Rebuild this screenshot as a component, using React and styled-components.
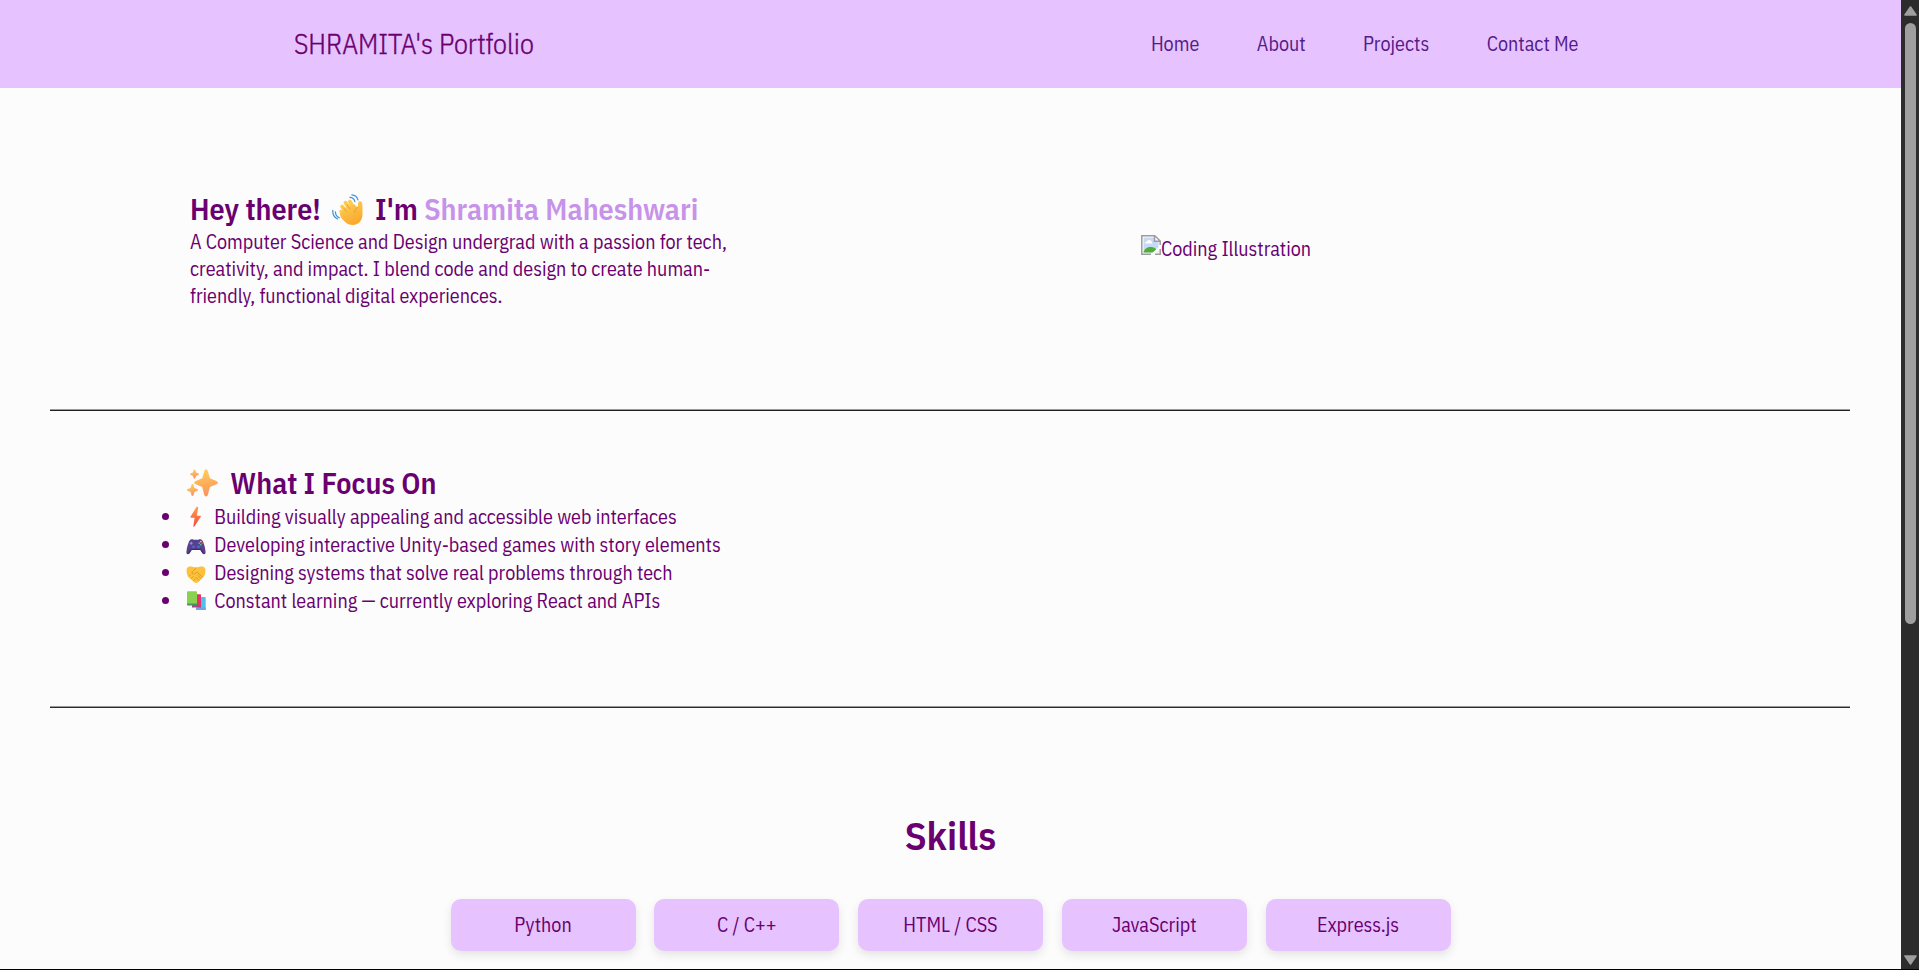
import React from 'react';
import styled, { createGlobalStyle } from 'styled-components';

const GlobalStyle = createGlobalStyle`
  * { margin: 0; padding: 0; box-sizing: border-box; }
  body {
    background: #fcfcfc;
    color: #6a0070;
    font-family: "IBM Plex Sans Condensed", "Open Sans", "Liberation Sans", sans-serif;
    font-size: 20px;
    overflow: hidden;
  }
`;

const Window = styled.div`
  display: flex;
  height: 970px;
  overflow: hidden;
  border-bottom: 1px solid #000;
`;

const Page = styled.div`
  flex: 1;
  min-width: 0;
  overflow: hidden;
`;

const Navbar = styled.header`
  display: flex;
  align-items: center;
  justify-content: space-between;
  height: 88px;
  padding: 0 322.5px 1px 294px;
  background: #e6c3ff;
`;

const Brand = styled.div`
  font-size: 28px;
  font-weight: 300;
  -webkit-text-stroke: 0.35px currentColor;
`;

const NavLinks = styled.nav`
  display: flex;
  gap: 57.5px;
`;

const NavLink = styled.a`
  color: #551a8b;
`;

const Hero = styled.section`
  display: flex;
  align-items: center;
  height: 321px;
  padding-left: 190px;
`;

const HeroText = styled.div`
  width: 951px;
`;

const Heading = styled.h2`
  height: 39px;
  font-size: 30px;
  font-weight: 600;
  line-height: 39px;
  white-space: nowrap;
`;

const Name = styled.span`
  color: #c792ea;
`;

const Intro = styled.p`
  max-width: 570px;
`;

const MissingImage = styled.div`
  display: flex;
  align-items: flex-start;
  svg { display: block; }
`;

const Divider = styled.hr`
  height: 2px;
  margin: 0 51px 0 50px;
  border: 0;
  border-top: 1px solid #9a9a9a;
  background: ${p => p.$color};
`;

const Focus = styled.section`
  height: 295px;
  padding: 52px 0 0 185px;
`;

const FocusList = styled.ul`
  margin-top: 1px;
  list-style: none;
`;

const FocusItem = styled.li`
  display: flex;
  align-items: center;
  height: 28px;
  line-height: 28px;
  white-space: nowrap;
  &::before {
    content: "";
    width: 7px;
    height: 7px;
    margin: 0 16px 1px -23px;
    border-radius: 50%;
    background: currentColor;
  }
`;

const Emoji = styled.svg`
  display: inline-block;
  overflow: visible;
  width: ${p => p.$size}px;
  height: ${p => p.$size}px;
  margin: 0 ${p => p.$after}px 0 ${p => p.$before || 0}px;
  vertical-align: ${p => p.$drop}px;
`;

const Skills = styled.section`
  display: flex;
  flex-direction: column;
  align-items: center;
  padding-top: 101px;
`;

const SkillsTitle = styled.h1`
  font-size: 40px;
  font-weight: 600;
  line-height: 52px;
`;

const SkillGrid = styled.div`
  display: flex;
  justify-content: space-between;
  width: 1000px;
  margin-top: 38px;
`;

const SkillCard = styled.div`
  width: 185px;
  padding: 12px 0 13px;
  border-radius: 10px;
  background: #e6c3ff;
  box-shadow: 0 4px 10px rgba(0, 0, 0, 0.1);
  text-align: center;
`;

const Scrollbar = styled.aside`
  display: flex;
  flex-direction: column;
  align-items: center;
  width: 18px;
  padding: 6px 0 4px;
  background: #2c2c2c;
`;

const Thumb = styled.div`
  width: 11px;
  height: 601px;
  margin: 7px 0 auto;
  border-radius: 6px;
  background: #9f9f9f;
`;

const Arrow = styled.svg`
  width: 13px;
  height: 10px;
  transform: ${p => (p.$down ? 'rotate(180deg)' : 'none')};
`;

const ScrollArrow = ({ down }) => (
  <Arrow $down={down} viewBox="0 0 13 10">
    <path d="M6.5 1 12 9H1Z" fill="#9f9f9f" stroke="#9f9f9f" strokeWidth="1.6" strokeLinejoin="round" />
  </Arrow>
);

const Wave = () => (
  <Emoji viewBox="0 0 32 32" $size={31} $before={5} $after={5.5} $drop={-5}>
    <defs>
      <linearGradient id="hand" x1="0" y1="0" x2="0.5" y2="1">
        <stop offset="0" stopColor="#ffd35a" />
        <stop offset="1" stopColor="#f9a92e" />
      </linearGradient>
    </defs>
    <g fill="none" stroke="#ffca4d" strokeWidth="4" strokeLinecap="round">
      <path d="M14 23 9.500 18" />
      <path d="m15 19-4.500-6" />
      <path d="M18.500 16 14 9" />
      <path d="m22.500 15-4-7" />
    </g>
    <path d="m8 20 7-7 8-2.500 3.500 3.500.4-4.500c.3-3 4.300-2.700 4.400.5l.2 10.500c0 6.500-3.500 11.500-10 11.500-5.500 0-9-3.500-12.500-8Z" fill="url(#hand)" />
    <path d="m12 14.500 3 3.800M15.500 11l3 4.500M26.500 14c-2 .8-3.200 2.500-3 5" fill="none" stroke="#e8952d" strokeWidth=".8" strokeLinecap="round" />
    <path d="M18.500 3.600q4 0 5.100 4.200M20.500.8q5 .4 6.300 5.200M3.500 18.500q.2 4.200 4 6M.8 16.800q-.5 6.500 5 9" fill="none" stroke="#4196d9" strokeWidth="1.300" strokeLinecap="round" />
  </Emoji>
);

const Sparkles = () => (
  <Emoji viewBox="0 0 32 32" $size={32} $before={1} $after={6} $drop={-5}>
    <defs>
      <linearGradient id="star" x1="0" y1="0" x2="0.2" y2="1">
        <stop offset="0" stopColor="#ffd35e" />
        <stop offset="1" stopColor="#fc9559" />
      </linearGradient>
    </defs>
    <g fill="url(#star)">
      <path d="M20 2.500c1 0 1.500.6 1.900 1.900l2 6.800 6.500 2.700c2 .8 2 2.600 0 3.400l-6.500 2.800-2 7.700c-.7 2.300-3 2.300-3.700 0l-2-7.700-6.400-2.800c-2-.8-2-2.600 0-3.400l6.400-2.700 2-6.800C18.500 3.100 19 2.500 20 2.500Z" />
      <path d="M8.500 2.500c.6 0 .8.400 1 1l.6 2 2 .8c1 .4 1 1.400 0 1.800l-2 .8-.7 2.100c-.3 1-1.500 1-1.800 0l-.7-2.100-2-.8c-1-.4-1-1.400 0-1.800l2-.8.6-2c.2-.6.500-1 1-1Z" />
      <path d="M6.500 17c.6 0 .9.500 1.100 1.200l.8 2.700 2.700 1.100c1.200.5 1.200 1.500 0 2l-2.700 1.100-.8 3c-.4 1.300-1.800 1.300-2.200 0l-.8-3L1.900 24c-1.200-.5-1.200-1.500 0-2l2.700-1.100.8-2.700c.2-.7.500-1.200 1.100-1.200Z" />
    </g>
  </Emoji>
);

const Bolt = () => (
  <Emoji viewBox="0 0 20 20" $size={20} $before={1} $after={4} $drop={-3}>
    <defs>
      <linearGradient id="bolt" x1="0" y1="0" x2="0" y2="1">
        <stop offset="0" stopColor="#ffa04b" />
        <stop offset="1" stopColor="#f4493e" />
      </linearGradient>
    </defs>
    <path d="M10.300.3 4.500 9.800c-.3.500-.1.900.5.900h3.600L7.400 19c-.1.900.5 1.100 1 .4l6.400-9.700c.4-.6.1-1-.5-1h-3.500L12.200.8c.2-1-1.300-1.300-1.900-.5Z" fill="url(#bolt)" />
  </Emoji>
);

const Gamepad = () => (
  <Emoji viewBox="0 0 20 20" $size={20} $before={1} $after={4} $drop={-4}>
    <path d="M3 5.600C4 3.300 6.300 3 7.500 3.700h5C13.700 3 16 3.300 17 5.600c1.300 3 2.300 7 2.600 10.300.2 2.500-2 3-3.300 1l-1.900-3H5.600l-1.900 3c-1.300 2-3.500 1.500-3.300-1C.7 12.600 1.700 8.600 3 5.600Z" fill="#5b3f8f" />
    <path d="M5.600 13.900h8.800l1.900 3c.7 1 1.700 1.400 2.400 1-1.700-1-2.500-5.200-4.400-5.200H5.700c-1.900 0-2.700 4.200-4.400 5.200.7.400 1.700 0 2.400-1Z" fill="#3c2b70" />
    <circle cx="7.500" cy="10.800" r="1.600" fill="#4968b8" />
    <circle cx="12.500" cy="10.800" r="1.600" fill="#4968b8" />
    <path d="M5.200 5.700v3M3.700 7.200h3" stroke="#6fa5e4" strokeWidth="1.100" />
    <circle cx="14.800" cy="5.600" r=".9" fill="#f4c542" />
    <circle cx="16.400" cy="7.200" r=".9" fill="#f0444f" />
    <circle cx="13.200" cy="7.200" r=".9" fill="#4aa8ee" />
    <circle cx="14.800" cy="8.700" r=".9" fill="#3ec28e" />
  </Emoji>
);

const Handshake = () => (
  <Emoji viewBox="0 0 20 20" $size={20} $before={1} $after={4} $drop={-4}>
    <path d="M.6 5.500c.2-2 1.600-3 3.400-3 2.300 0 4 .8 6 .8s3.700-.8 6-.8c1.800 0 3.200 1 3.400 3 .3 3.500-.4 5.700-2.100 7.500l-5 5c-1.500 1.400-3 1-4.400 0L2.900 13.500C1.100 11.500.3 9 .6 5.500Z" fill="#fcc23c" />
    <path d="M10 4 6.200 7.900c-1 1.600 1.300 3 2.700 1.700L11 8l5.700 5.200M13.300 16.500l-3-3M15.100 14.700l-3.200-3.200M3.200 12.200l1.500-1.500M5.300 14.500l2-2M7.700 16.500l1.900-1.900" fill="none" stroke="#dc9026" strokeWidth=".8" strokeLinecap="round" />
  </Emoji>
);

const Books = () => (
  <Emoji viewBox="0 0 20 20" $size={20} $before={1} $after={4} $drop={-3}>
    <path d="M12.500 6h6.200c.6 0 1 .4 1 1v12H11Z" fill="#4fc0ee" />
    <path d="M10 16.500h9.700V19H10Z" fill="#72a3e0" />
    <path d="M8 3.300h6.200c.5 0 .8.300.8.800v12H8Z" fill="#ea2f69" />
    <path d="M6 14h9v2.500H6Z" fill="#a8477f" />
    <path d="M1 1.200c0-.6.300-.9.900-.9h8.300c.5 0 .8.300.8.900V13H1Z" fill="#8bd150" />
    <path d="M1 12.500h10v2H2c-.6 0-1-.4-1-1Z" fill="#3f9a68" />
  </Emoji>
);

const BrokenIcon = () => (
  <svg width="20" height="20" viewBox="0 0 20 20">
    <path d="M.8.8h13L19.200 6v13.200H.8Z" fill="#fff" />
    <path d="M2.500 2.500h11v4h4v11h-15Z" fill="#c6d9f7" />
    <path d="M4 8.500a2 2 0 0 1 2-2 2.500 2.500 0 0 1 4.500 0 1.500 1.500 0 0 1 .5 2Z" fill="#fff" />
    <path d="M2.500 17.500c1-4 4-5.500 7-5.500 2 0 4 .6 5.500 2v3.500Z" fill="#4fae37" />
    <path d="M9 20 20 10v3.500L13 20Z" fill="#fcfcfc" />
    <path d="M10 19.200H.8V.8h13L19.200 6v4M13.500 1v5.200h5.300M14 19.200h5.200V14" fill="none" stroke="#9c9c9c" strokeWidth="1.500" />
  </svg>
);

const focusItems = [
  [Bolt, 'Building visually appealing and accessible web interfaces'],
  [Gamepad, 'Developing interactive Unity-based games with story elements'],
  [Handshake, 'Designing systems that solve real problems through tech'],
  [Books, 'Constant learning — currently exploring React and APIs'],
];

const skills = ['Python', 'C / C++', 'HTML / CSS', 'JavaScript', 'Express.js'];

export default function App() {
  return (
    <Window>
      <GlobalStyle />
      <Page>
        <Navbar>
          <Brand>SHRAMITA's Portfolio</Brand>
          <NavLinks>
            {['Home', 'About', 'Projects', 'Contact Me'].map(t => (
              <NavLink key={t}>{t}</NavLink>
            ))}
          </NavLinks>
        </Navbar>
        <Hero>
          <HeroText>
            <Heading>
              Hey there! <Wave /> I'm <Name>Shramita Maheshwari</Name>
            </Heading>
            <Intro>
              A Computer Science and Design undergrad with a passion for tech, creativity, and impact. I blend
              code and design to create human-friendly, functional digital experiences.
            </Intro>
          </HeroText>
          <MissingImage>
            <BrokenIcon />
            Coding Illustration
          </MissingImage>
        </Hero>
        <Divider $color="#222222" />
        <Focus>
          <Heading>
            <Sparkles /> What I Focus On
          </Heading>
          <FocusList>
            {focusItems.map(([Icon, text]) => (
              <FocusItem key={text}>
                <span>
                  <Icon /> {text}
                </span>
              </FocusItem>
            ))}
          </FocusList>
        </Focus>
        <Divider $color="#6a0070" />
        <Skills>
          <SkillsTitle>Skills</SkillsTitle>
          <SkillGrid>
            {skills.map(s => (
              <SkillCard key={s}>{s}</SkillCard>
            ))}
          </SkillGrid>
        </Skills>
      </Page>
      <Scrollbar>
        <ScrollArrow />
        <Thumb />
        <ScrollArrow down />
      </Scrollbar>
    </Window>
  );
}
